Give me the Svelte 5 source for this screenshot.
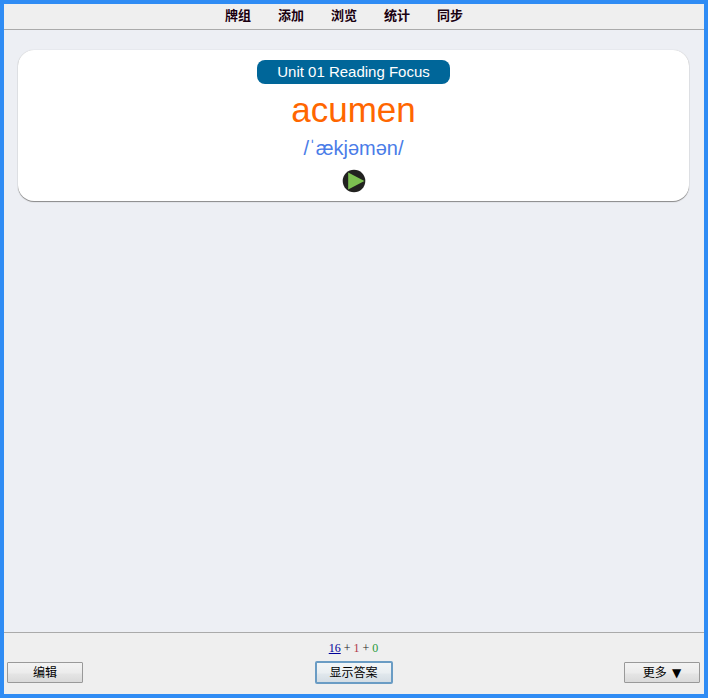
<script lang="ts">
	interface MenuItem {
		id: string;
		label: string;
	}

	const menu: MenuItem[] = [
		{ id: 'decks', label: '牌组' },
		{ id: 'add', label: '添加' },
		{ id: 'browse', label: '浏览' },
		{ id: 'stats', label: '统计' },
		{ id: 'sync', label: '同步' }
	];

	const card = {
		unit: 'Unit 01 Reading Focus',
		word: 'acumen',
		phonetic: '/ˈækjəmən/'
	};

	const counts = { fresh: 16, learning: 1, review: 0 };
</script>

<div class="window">
	<nav class="toolbar">
		{#each menu as item (item.id)}
			<a href="#{item.id}">{item.label}</a>
		{/each}
	</nav>

	<main>
		<article class="card">
			<div class="unit">{card.unit}</div>
			<h1>{card.word}</h1>
			<div class="phonetic">{card.phonetic}</div>
			<button type="button" class="play" aria-label="播放">
				<svg viewBox="0 0 24 24" width="24" height="24" aria-hidden="true">
					<circle cx="12" cy="12" r="11.3" fill="#222220" />
					<path d="M6.2 3.6 L22.4 12 L6.2 20.4 Z" fill="#7cc050" />
				</svg>
			</button>
		</article>
	</main>

	<footer>
		<div class="side">
			<button type="button" class="btn">编辑</button>
		</div>
		<div class="middle">
			<div class="counts">
				<span class="fresh">{counts.fresh}</span> + <span class="learning">{counts.learning}</span> + <span class="review">{counts.review}</span>
			</div>
			<button type="button" class="btn default">显示答案</button>
		</div>
		<div class="side right">
			<button type="button" class="btn">更多 <span class="arrow">▼</span></button>
		</div>
	</footer>
</div>

<style>
	:global(body) {
		margin: 0;
	}

	.window {
		display: flex;
		flex-direction: column;
		box-sizing: border-box;
		min-height: 100vh;
		border: 4px solid #2f8cf4;
		background: #edeff4;
		font-family: 'Liberation Sans', 'Noto Sans CJK SC', sans-serif;
	}

	.toolbar {
		display: flex;
		justify-content: center;
		gap: 27px;
		padding: 2px 20px 3px 0;
		border-bottom: 1px solid #aaa;
		background: #efefef;
		font-size: 13px;
		font-weight: 700;
		line-height: 20px;
	}

	.toolbar a {
		color: #1a0010;
		text-decoration: none;
	}

	main {
		flex: 1;
		padding: 20px 15px 20px 14px;
	}

	.card {
		display: flex;
		flex-direction: column;
		align-items: center;
		padding: 10px 10px 8px;
		border-radius: 16px;
		background: #fff;
		box-shadow: 0 1px 1px #888, 0 0 1px #bbb;
	}

	.unit {
		padding: 0 20px;
		border-radius: 8px;
		background: #069;
		color: #fff;
		font-size: 15px;
		line-height: 24px;
	}

	h1 {
		margin: 6px 0;
		color: #f60;
		font-size: 35px;
		font-weight: 400;
		line-height: 40px;
	}

	.phonetic {
		color: #4a7ce8;
		font-size: 20px;
		line-height: 24px;
	}

	.play {
		display: block;
		margin-top: 9px;
		padding: 0;
		border: 0;
		background: none;
		cursor: pointer;
	}

	.play svg {
		display: block;
	}

	footer {
		display: flex;
		align-items: flex-end;
		padding: 6px 4px 11px 3px;
		border-top: 1px solid #aaa;
		background: #efefef;
	}

	.side {
		flex: 1;
	}

	.right {
		text-align: right;
	}

	.middle {
		text-align: center;
	}

	.counts {
		margin-bottom: 4px;
		color: #222;
		font-family: 'Liberation Serif', serif;
		font-size: 12px;
		line-height: 18px;
	}

	.fresh {
		color: #009;
		text-decoration: underline;
	}

	.learning {
		color: #b03848;
	}

	.review {
		color: #2a9a3c;
	}

	.btn {
		display: inline-block;
		box-sizing: border-box;
		min-width: 76px;
		height: 21px;
		padding: 0 12px;
		border: 1px solid #999;
		border-radius: 1px;
		background: linear-gradient(#f3f3f3, #ececec 50%, #e4e4e4 60%, #dadada);
		color: #000;
		font-family: 'Liberation Sans', 'Noto Sans CJK SC', sans-serif;
		font-size: 12px;
		line-height: 18px;
		vertical-align: bottom;
	}

	.default {
		height: 23px;
		min-width: 78px;
		margin-bottom: -1px;
		border: 2px solid #6a9cc4;
		border-radius: 2px;
		background: linear-gradient(#f2f5f7, #eaeff2 50%, #e0e7ec 60%, #d4dde4);
	}

	.arrow {
		margin-left: 2px;
		font-family: 'DejaVu Sans', sans-serif;
	}
</style>
